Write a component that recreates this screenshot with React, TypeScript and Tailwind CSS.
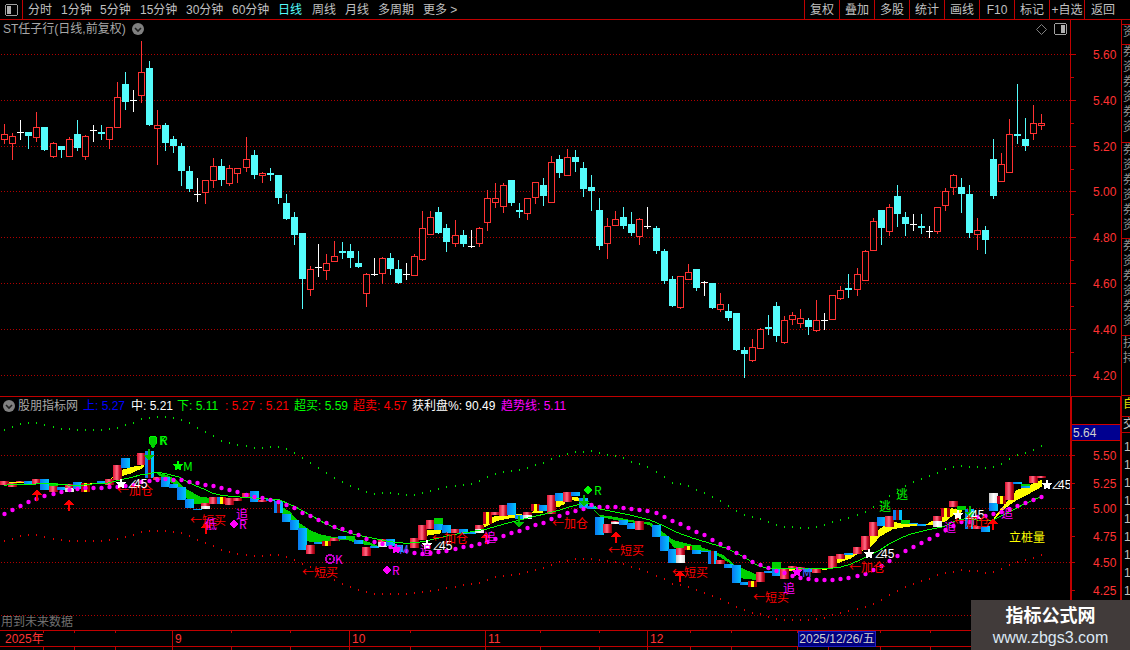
const RED = "#ff3232";
const CY = "#54fcfc";

// candles: type, high, top, bottom, low (page y × 3)
const candles: [string, number, number, number, number][] = [
  ["r",372,403,418,430],["r",400,409,430,476],["w",360,397,397,416],["c",396,396,408,443],["r",336,382,410,423],
  ["c",381,381,450,450],["r",426,430,467,470],["c",438,438,450,471],["r",412,418,467,467],["c",360,402,444,450],
  ["r",405,409,467,476],["w",376,390,390,422],["c",376,396,402,417],["r",382,382,418,444],["r",246,292,382,382],
  ["c",216,252,306,327],["w",270,300,300,333],["r",123,217,286,305],["c",183,204,375,375],["r",330,375,383,492],
  ["c",369,375,429,450],["c",408,417,438,456],["c",429,438,513,555],["c",498,513,567,573],["w",534,582,582,603],
  ["r",541,541,575,609],["r",474,499,541,561],["c",477,498,540,555],["r",495,505,549,555],["r",505,505,520,546],
  ["r",411,478,500,513],["c",450,465,525,534],["r",516,520,526,546],["c",504,519,525,540],["c",525,525,594,609],
  ["c",582,609,657,657],["c",636,651,705,732],["c",699,699,837,924],["r",798,808,867,885],["w",732,802,802,828],
  ["r",762,790,809,837],["r",723,769,782,782],["c",726,753,759,774],["c",732,753,774,801],["c",753,789,801,801],
  ["r",819,822,879,918],["w",774,823,823,825],["r",771,774,819,849],["c",759,774,807,822],["c",780,807,849,849],
  ["w",789,823,823,837],["r",762,768,825,825],["r",633,684,777,780],["r",633,651,702,702],["c",621,636,699,699],
  ["c",672,684,726,753],["r",660,705,729,738],["c",690,705,732,738],["w",690,739,739,741],["r",681,684,729,738],
  ["r",570,594,666,690],["r",549,594,606,621],["r",549,555,618,636],["c",540,540,609,615],["c",610,630,636,651],
  ["r",594,594,639,657],["r",546,547,591,609],["c",534,555,588,615],["r",468,487,605,605],["c",465,477,519,530],
  ["r",447,472,526,526],["c",450,471,486,513],["c",486,504,567,588],["c",525,561,573,630],["c",594,630,738,747],
  ["r",654,678,729,774],["r",633,657,675,675],["c",621,651,678,684],["c",636,672,699,705],["r",654,657,708,732],
  ["w",621,679,679,684],["c",678,684,753,759],["c",747,753,843,849],["c",828,837,918,918],["r",829,829,921,924],
  ["r",792,817,838,838],["c",807,807,864,870],["w",843,847,847,885],["c",849,849,924,924],["r",879,913,926,933],
  ["c",912,933,954,960],["c",939,939,1050,1050],["c",1041,1050,1062,1131],["r",1017,1041,1080,1083],["r",984,987,1044,1044],
  ["c",945,981,986,1002],["c",906,918,1008,1023],["r",948,960,1026,1029],["r",936,946,957,972],["r",927,955,968,981],
  ["c",954,960,981,1002],["r",900,960,990,993],["w",939,960,960,987],["r",885,885,957,957],["r",858,870,894,897],
  ["c",822,864,870,891],["r",804,822,867,885],["r",750,753,840,840],["r",654,664,750,750],["c",630,630,684,732],
  ["r",612,621,693,705],["c",555,588,642,678],["c",637,651,672,705],["w",642,673,673,690],["c",642,678,684,699],
  ["w",678,692,692,711],["r",621,621,693,699],["r",565,574,616,630],["r",522,526,562,582],["c",534,561,582,636],
  ["c",555,582,699,711],["r",654,690,702,747],["c",678,690,720,759],["c",417,477,588,594],["r",459,492,542,542],
  ["r",357,402,515,515],["c",252,402,408,429],["c",354,417,438,450],["r",315,370,398,417],["r",342,370,375,387],
];

const cx = (i: number) => Math.round(4.3 + 8.04 * i);
const yz = (z: number) => Math.round(z / 3);

// indicator bars: index, top, bottom (zoom y), kind
const bars: [number, number, number, string][] = [
  [0,198,211,"r"],[1,205,216,"r"],[2,197,201,"r"],[3,198,207,"b"],[4,192,207,"r"],[5,192,225,"b"],[6,213,232,"r"],[7,215,225,"b"],
  [8,207,219,"r"],[8,219,231,"w"],[9,201,222,"b"],[10,204,231,"y"],[12,198,206,"b"],[13,192,210,"r"],[14,150,195,"r"],
  [15,129,159,"b"],[17,114,150,"r"],[18,108,189,"s"],[19,186,195,"r"],[20,186,216,"b"],[21,207,219,"b"],[22,216,255,"b"],
  [23,252,279,"b"],[24,282,285,"b"],[25,264,273,"r"],[25,273,282,"w"],[26,246,267,"r"],[27,246,267,"s2"],[28,249,270,"r"],
  [29,249,258,"r"],[30,234,249,"r"],[31,228,261,"b"],[32,255,261,"r"],[33,252,258,"b"],[34,258,294,"s"],
  [35,297,321,"b"],[36,315,345,"b"],[37,339,405,"b"],[38,390,417,"r"],[39,381,387,"b"],[40,378,393,"y"],[41,369,378,"r"],
  [42,363,372,"b"],[43,363,372,"g"],[44,375,387,"b"],[45,396,423,"r"],[46,393,399,"b"],[47,372,381,"r"],[47,381,396,"w"],
  [48,372,393,"b"],[49,390,411,"b"],[51,369,399,"r"],[52,330,375,"r"],[53,315,342,"r"],[54,309,327,"g"],[54,327,345,"b"],
  [55,330,354,"b"],[56,342,354,"r"],[57,342,357,"b"],[58,351,358,"b"],[59,330,342,"r"],[59,342,354,"w"],[60,291,327,"y"],
  [61,291,300,"r"],[62,270,303,"r"],[63,264,300,"b"],[64,300,312,"b"],[65,291,300,"r"],[65,300,312,"w"],[66,267,288,"y"],
  [67,270,288,"b"],[68,240,297,"r"],[69,234,258,"b"],
  [70,231,261,"r"],[71,231,243,"b"],[72,249,279,"b"],[73,273,282,"b"],[74,306,360,"b"],[75,327,354,"r"],[76,318,321,"r"],[76,321,327,"w"],
  [77,315,330,"b"],[78,324,342,"b"],[79,318,345,"r"],[81,330,366,"b"],[82,363,408,"b"],[83,402,444,"b"],[84,399,420,"r"],[84,420,444,"w"],
  [85,393,405,"y"],[86,390,405,"g"],[86,405,417,"b"],[87,408,411,"b"],[88,408,447,"s"],[89,435,447,"r"],[90,447,459,"b"],[91,450,504,"b"],
  [92,501,510,"b"],[93,498,516,"y"],[94,471,501,"r"],[95,468,474,"b"],[96,441,462,"g"],[96,462,483,"b"],[97,459,492,"r"],[98,453,459,"r"],
  [99,456,465,"r"],[100,459,471,"b"],[101,459,474,"r"],
  [103,423,459,"r"],[104,417,432,"r"],[105,414,420,"b"],[106,396,417,"r"],[107,363,405,"r"],[108,321,363,"r"],[109,306,333,"b"],
  [110,303,336,"r"],[111,285,315,"s"],[112,315,327,"g"],[113,324,327,"b"],[114,327,333,"b"],[116,303,318,"r"],[116,318,336,"w"],
  [117,279,306,"y"],[118,258,276,"r"],[119,273,285,"g"],[120,282,342,"s"],[121,333,342,"r"],[122,333,351,"b"],[123,234,264,"w"],[123,264,288,"b"],
  [124,243,267,"y"],[125,201,255,"r"],[126,201,207,"b"],[127,207,213,"g"],[127,213,219,"b"],[128,183,204,"r"],[129,183,189,"r"],
];
const fillOf: Record<string, string> = { r: "url(#gr)", b: "url(#gb)", g: "#00d000", w: "url(#gw)", y: "url(#gy)", s: "url(#gs)", s2: "url(#g2)" };

const magenta = [297,285,273,261,252,243,237,231,225,222,219,219,219,216,216,213,210,201,198,195,192,195,195,201,204,210,213,219,225,231,240,246,249,255,261,
  270,279,294,303,315,324,336,342,351,360,372,381,387,396,402,408,414,417,414,411,408,402,396,393,387,381,372,363,354,348,339,330,324,312,303,
  294,288,282,270,276,276,276,279,282,285,288,294,306,318,327,339,351,360,375,387,399,414,426,441,450,459,468,474,483,489,492,495,495,495,492,
  489,483,477,465,453,438,423,408,396,384,372,360,345,333,321,321,306,303,297,291,282,273,264,255,246];
const greenBand = [42,33,24,21,21,27,33,39,39,42,42,42,42,39,36,27,21,9,6,3,3,6,12,21,36,48,60,75,81,87,90,96,96,93,93,
  99,111,126,141,156,171,186,198,210,219,228,234,231,231,234,237,237,231,225,219,213,210,207,204,195,183,174,168,165,162,156,147,141,129,120,
  114,108,108,105,111,117,120,126,138,144,153,168,183,201,204,210,222,231,243,255,270,285,297,303,309,318,327,333,333,336,336,333,327,318,312,
  306,297,288,273,258,240,228,210,198,189,180,171,159,153,150,153,153,156,153,144,129,117,111,102,90];
const redBand = [375,369,360,357,357,363,369,372,375,375,375,375,375,372,369,363,357,348,345,345,345,348,351,360,372,381,390,402,408,414,417,420,420,417,417,
  423,432,444,453,465,477,492,504,513,522,528,534,534,534,534,534,531,528,525,522,516,513,507,504,501,492,483,480,477,474,468,462,456,447,438,
  435,429,429,429,432,435,438,444,453,459,468,480,489,504,507,513,522,531,540,549,561,572,582,590,595,603,609,612,612,612,612,609,606,597,591,
  585,579,572,564,552,537,525,513,504,495,489,477,471,468,462,465,465,471,468,459,447,438,432,426,417];

const pts = (off: number, s: string) =>
  s.split(" ").map((p) => { const [x, y] = p.split(",").map(Number); return `${off + x / 3},${415 + y / 3}`; }).join(" ");

const yellow: [number, string][] = [
  [0,"330,192 365,165 400,155 432,150 430,158 395,175 365,183"],[0,"27,201 72,201 72,205 27,205"],[0,"268,204 312,204 312,208 268,208"],
  [280,"440,345 482,342 482,355 440,362"],[280,"608,325 640,305 680,298 725,298 725,305 690,310 650,318 610,338"],[280,"750,290 790,288 790,293 750,296"],
  [280,"825,260 840,258 840,275 825,275"],[560,"0,258 15,258 15,268 0,272"],[560,"36,245 57,248 57,258 36,256"],[560,"685,462 705,462 705,468 685,468"],
  [560,"785,462 815,456 815,462 785,465"],[560,"830,432 840,432 840,445 830,445"],
  [830,"20,430 45,420 95,405 120,365 145,345 180,320 220,325 290,327 340,300 365,280 395,285 395,292 375,297 345,320 310,330 250,333 190,342 150,365 125,393 110,400 60,432 20,445"],
  [830,"490,310 530,260 560,225 600,210 635,195 636,215 600,235 560,255 525,280 495,312"],
];
const green: [number, string][] = [
  [0,"135,204 175,204 175,213 135,213"],[0,"470,172 500,180 530,195 555,220 600,245 640,250 625,265 585,268 560,250 535,220 505,195 475,180"],
  [280,"5,275 30,290 60,325 90,345 120,358 160,366 200,370 250,376 290,390 290,394 250,388 200,375 160,378 110,384 80,378 50,340 25,310 5,295"],
  [560,"96,280 120,300 160,305 210,315 270,322 300,345 340,375 400,390 450,405 490,420 525,450 570,470 590,480 590,495 545,490 510,445 470,420 440,410 405,405 345,400 325,378 300,362 270,330 240,325 180,318 120,306"],
];
const line: [number, string][] = [
  [0,"12,211 36,208 60,207 84,207 108,207 132,206 156,206 180,208 204,210 228,210 252,210 276,207 300,205 324,204 348,198 372,192 396,187 420,180 444,177 468,171 492,175 516,181 540,187 564,202 588,213 612,222 636,234 660,240 684,243 708,245 732,247 756,249 780,250 804,252 840,254"],
  [280,"0,255 45,275 85,297 135,325 180,345 230,360 280,370 330,380 380,385 430,380 480,368 525,358 575,350 620,342 680,325 740,310 790,298 840,285"],
  [560,"0,285 30,275 70,265 94,265 110,280 150,288 210,300 270,315 305,330 345,350 400,370 460,388 500,400 550,425 590,450 620,460 660,460 735,462 810,459"],
  [830,"0,460 30,457 60,448 90,435 120,420 150,405 180,385 210,370 240,358 270,350 300,343 340,335 375,318 410,310 440,315 490,315 520,300 550,285 580,268 610,255 632,245"],
];

const starPts = (x: number, y: number, r: number) =>
  Array.from({ length: 10 }, (_, k) => {
    const a = -Math.PI / 2 + (k * Math.PI) / 5;
    const q = k % 2 ? r * 0.42 : r;
    return `${x + q * Math.cos(a)},${y + q * Math.sin(a)}`;
  }).join(" ");

const labels: [string, number, number, string][] = [
  ["K",159,440,"#00ff00"],["R",160,440,"#00ff00"],["M",183,466,"#00ff00"],
  ["←加仓",117,490,"#ff0000"],["∠45",128,483,"#ffffff"],["←短买",190,520,"#ff0000"],["低",205,524,"#ff00ff"],
  ["R",239,524,"#ff00ff"],["追",236,514,"#ff00ff"],
  ["K",335,559,"#ff00ff"],["←短买",302,572,"#ff0000"],["R",392,570,"#ff00ff"],["M",399,549,"#5060ff"],
  ["追",420,550,"#ff00ff"],["∠45",433,545,"#ffffff"],["←加仓",432,538,"#ff0000"],["追",484,537,"#ff00ff"],
  ["R",594,490,"#00ff00"],["←加仓",552,523,"#ff0000"],["←短买",608,550,"#ff0000"],["←短买",672,572,"#ff0000"],
  ["←短买",753,597,"#ff0000"],["追",783,588,"#ff00ff"],["M",802,572,"#5060ff"],
  ["逃",896,494,"#00ff00"],["逃",879,506,"#00ff00"],["∠45",875,553,"#ffffff"],["←加仓",849,567,"#ff0000"],
  ["∠45",965,514,"#ffffff"],["←加仓",954,521,"#ff0000"],["追",944,527,"#ff00ff"],["追",1001,513,"#ff00ff"],
  ["∠45",1052,484,"#ffffff"],["立桩量",1009,537,"#ffff00"],
];
const stars: [number, number, string][] = [
  [178,466,"#00ff00"],[121,484,"#ffffff"],[396,549,"#ff00ff"],[427,545,"#ffffff"],[797,572,"#ff00ff"],
  [869,554,"#ffffff"],[958,515,"#ffffff"],[1047,485,"#ffffff"],
];
const diamonds: [number, number, string][] = [[234,524,"#ff00ff"],[387,570,"#ff00ff"],[588,490,"#00ff00"]];
const upArrows: [number, number][] = [[37,489],[69,499],[206,522],[486,532],[616,531],[680,570],[993,518]];
const downArrows: [number, number][] = [[149,449],[519,516],[584,495],[970,506]];

const grid = (ys: number[]) =>
  ys.map((y) => <line key={y} x1="1" x2="1070" y1={y} y2={y} stroke="#b00000" strokeDasharray="1 2" />);

function PriceChart() {
  return (
    <svg className="block w-[1070px] h-[358px]" viewBox="0 38 1070 358" shapeRendering="crispEdges">
      {grid([54.5, 100.5, 146.5, 191.5, 237.5, 283.5, 329.5, 375.5])}
      {candles.map(([t, h, top, bot, l], i) => {
        const x = cx(i);
        const [H, T, B, L] = [yz(h), yz(top), yz(bot), yz(l)];
        if (t === "w")
          return (
            <g key={i} fill="#ffffff">
              <rect x={x} y={H} width="1" height={L - H + 1} />
              <rect x={x - 3} y={T} width="7" height="1" />
            </g>
          );
        if (t === "c")
          return (
            <g key={i} fill={CY}>
              <rect x={x} y={H} width="1" height={L - H + 1} />
              <rect x={x - 3} y={T} width="7" height={Math.max(B - T, 1)} />
            </g>
          );
        return (
          <g key={i}>
            <rect x={x} y={H} width="1" height={T - H} fill={RED} />
            <rect x={x} y={B} width="1" height={L - B + 1} fill={RED} />
            <rect x={x - 2.5} y={T + 0.5} width="6" height={Math.max(B - T, 1)} fill="#000" stroke={RED} />
          </g>
        );
      })}
    </svg>
  );
}

function Label({ t, x, y, c }: { t: string; x: number; y: number; c: string }) {
  const by = y + 4.5;
  if (t.startsWith("∠"))
    return (
      <text y={by} fill={c} shapeRendering="auto">
        <tspan x={x - 1} className="text-[11px]">∠</tspan>
        <tspan x={x + 6}>45</tspan>
      </text>
    );
  return (
    <text x={x} y={by} fill={c} shapeRendering="auto" className="font-['Noto_Sans_CJK_SC','Liberation_Sans',sans-serif]">
      {t}
    </text>
  );
}

function IndicatorChart() {
  return (
    <svg className="block w-[1070px] h-[216px]" viewBox="0 414 1070 216" shapeRendering="crispEdges">
      <defs>
        <linearGradient id="gr"><stop offset="0" stopColor="#e01030" /><stop offset=".45" stopColor="#ff7088" /><stop offset=".7" stopColor="#d01030" /><stop offset="1" stopColor="#800000" /></linearGradient>
        <linearGradient id="gb"><stop offset="0" stopColor="#0a78f0" /><stop offset="1" stopColor="#00c4ff" /></linearGradient>
        <linearGradient id="gw"><stop offset="0" stopColor="#c8c8c8" /><stop offset=".5" stopColor="#ffffff" /><stop offset="1" stopColor="#e0e0e0" /></linearGradient>
        <linearGradient id="gy"><stop offset=".33" stopColor="#c00020" /><stop offset=".33" stopColor="#ffff00" /><stop offset=".66" stopColor="#ffff00" /><stop offset=".66" stopColor="#a00000" /></linearGradient>
        <linearGradient id="gs"><stop offset=".33" stopColor="#0a80f0" /><stop offset=".33" stopColor="#800000" /><stop offset=".66" stopColor="#800000" /><stop offset=".66" stopColor="#00c0ff" /></linearGradient>
        <linearGradient id="g2"><stop offset=".33" stopColor="#0a80f0" /><stop offset=".33" stopColor="#ffff00" /><stop offset=".66" stopColor="#ffff00" /><stop offset=".66" stopColor="#d00000" /></linearGradient>
      </defs>
      {grid([455.5, 508.5, 562.5, 615.5])}
      {greenBand.map((z, i) => <rect key={i} x={cx(i)} y={415 + Math.round(z / 3)} width="1" height="2" fill="#00e000" />)}
      {redBand.map((z, i) => <rect key={i} x={cx(i)} y={415 + Math.round(z / 3)} width="1" height="2" fill="#e00000" />)}
      {yellow.map(([o, s], i) => <polygon key={i} points={pts(o, s)} fill="#ffff00" />)}
      {green.map(([o, s], i) => <polygon key={i} points={pts(o, s)} fill="#00d000" />)}
      {bars.map(([i, t, b, k], n) => (
        <rect key={n} x={cx(i) - 4} y={415 + Math.round(t / 3)} width="9" height={Math.round(b / 3) - Math.round(t / 3)} fill={fillOf[k]} />
      ))}
      {line.map(([o, s], i) => <polyline key={i} points={pts(o, s)} fill="none" stroke="#00ff00" />)}
      {magenta.map((z, i) => <circle key={i} cx={cx(i) + 0.5} cy={415 + z / 3} r="2.2" fill="#ff00ff" shapeRendering="geometricPrecision" />)}
      <circle cx="153" cy="440" r="4" fill="#00d000" stroke="#00ff00" />
      <polygon points="149,443 157,443 153,449" fill="#00d000" />
      <circle cx="330" cy="559" r="4" fill="none" stroke="#c000c0" strokeWidth="2" />
      <circle cx="330" cy="559" r="1.5" fill="#c000c0" />
      {diamonds.map(([x, y, c], i) => <polygon key={i} points={`${x - 4.5},${y} ${x},${y - 4.5} ${x + 4.5},${y} ${x},${y + 4.5}`} fill={c} />)}
      {stars.map(([x, y, c], i) => <polygon key={i} points={starPts(x, y, 6)} fill={c} />)}
      {upArrows.map(([x, y], i) => <polygon key={i} points={`${x},${y} ${x + 5},${y + 6} ${x + 1},${y + 6} ${x + 1},${y + 12} ${x - 1},${y + 12} ${x - 1},${y + 6} ${x - 5},${y + 6}`} fill="#ff0000" />)}
      {downArrows.map(([x, y], i) => <polygon key={i} points={`${x - 1},${y} ${x + 1},${y} ${x + 1},${y + 6} ${x + 5},${y + 6} ${x},${y + 12} ${x - 5},${y + 6} ${x - 1},${y + 6}`} fill="#00c000" />)}
      {labels.map(([t, x, y, c], i) => <Label key={i} t={t} x={x} y={y} c={c} />)}
    </svg>
  );
}

function PriceAxis() {
  const majors: [number, string][] = [[54.5,"5.60"],[100.5,"5.40"],[146.5,"5.20"],[191.5,"5.00"],[237.5,"4.80"],[283.5,"4.60"],[329.5,"4.40"],[375.5,"4.20"]];
  const minors = [77.5, 123.5, 169.5, 214.5, 260.5, 306.5, 352.5];
  return (
    <svg className="block w-[50px] h-[376px]" viewBox="1071 20 50 376" shapeRendering="crispEdges">
      {majors.map(([y, t]) => (
        <g key={t}>
          <line x1="1071" x2="1076" y1={y} y2={y} stroke="#c00000" />
          <text x="1093" y={y + 4.5} fill={RED}>{t}</text>
        </g>
      ))}
      {minors.map((y) => <line key={y} x1="1071" x2="1074" y1={y} y2={y} stroke="#c00000" />)}
    </svg>
  );
}

function IndicatorAxis() {
  const majors: [number, string][] = [[455.5,"5.50"],[483.5,"5.25"],[508.5,"5.00"],[536.5,"4.75"],[562.5,"4.50"],[590.5,"4.25"]];
  return (
    <svg className="block w-[48px] h-[233px]" viewBox="1072 397 48 233" shapeRendering="crispEdges">
      {majors.map(([y, t]) => (
        <g key={t}>
          <line x1="1072" x2="1075" y1={y} y2={y} stroke="#c00000" />
          <text x="1093" y={y + 4.5} fill={RED}>{t}</text>
        </g>
      ))}
    </svg>
  );
}

const tabs = [
  ["分时", "w-[33px]"], ["1分钟", "w-[39px]"], ["5分钟", "w-[40px]"], ["15分钟", "w-[46px]"], ["30分钟", "w-[46px]"], ["60分钟", "w-[46px]"],
  ["日线", "w-[34px] text-[#54fcfc]"], ["周线", "w-[33px]"], ["月线", "w-[33px]"], ["多周期", "w-[45px]"], ["更多 >", "w-[40px]"],
];
const buttons = ["复权", "叠加", "多股", "统计", "画线", "F10", "标记", "+自选"];
const legend: [string, string, string][] = [
  ["上: 5.27", "w-[48px]", "text-[#0000ff]"], ["中: 5.21", "w-[46px]", "text-white"], ["下: 5.11", "w-[48px]", "text-[#00ff00]"],
  [": 5.27", "w-[34px]", "text-[#ff0000]"], [": 5.21", "w-[35px]", "text-[#ff0000]"], ["超买: 5.59", "w-[59px]", "text-[#00ff00]"],
  ["超卖: 4.57", "w-[59px]", "text-[#ff0000]"], ["获利盘%: 90.49", "w-[89px]", "text-white"], ["趋势线: 5.11", "w-[80px]", "text-[#ff00ff]"],
];
const sideTop: [string, string][] = [["", "h-[5px]"], ["资", "h-[20px]"], ["券资券资券资", "h-[98px]"], ["券资券资券资", "h-[96px]"], ["券资券资券资", "h-[97px]"], ["扶持", "h-[60px]"]];

const topTicks = [43, 74, 115, 172, 231, 290, 349, 410, 485, 540, 599, 647, 690, 731, 797, 828, 880, 930];

function Dock({ right }: { right?: boolean }) {
  return (
    <svg width="13" height="12" viewBox="0 0 13 12" shapeRendering="crispEdges">
      <rect x="0.5" y="0.5" width="12" height="11" rx="2" fill="#000" stroke="#a0a0a0" />
      <rect x={right ? 7 : 2} y="2" width="4" height="8" fill="#b0b0b0" />
    </svg>
  );
}

function Chevron() {
  return (
    <svg width="12" height="12" viewBox="0 0 12 12">
      <circle cx="6" cy="6" r="6" fill="#808080" />
      <path d="M3 5 L6 8 L9 5" fill="none" stroke="#202020" strokeWidth="1.6" />
    </svg>
  );
}

export default function App() {
  return (
    <div className="relative flex flex-col w-[1130px] h-[650px] overflow-hidden bg-black text-[12px] leading-none text-[#c0c0c0] font-['Liberation_Sans','Noto_Sans_CJK_SC',sans-serif]">
      <header className="flex items-center h-[20px] shrink-0 border-b border-[#c00000]">
        <div className="flex items-center justify-center w-[23px] h-full border-r border-[#c00000]"><Dock /></div>
        <nav className="flex ml-[5px]">
          {tabs.map(([t, c]) => <span key={t} className={c}>{t}</span>)}
        </nav>
        <div className="flex ml-auto h-full">
          {buttons.map((b) => (
            <span key={b} className="flex items-center justify-center w-[35px] h-full border-l border-[#c00000]">{b}</span>
          ))}
          <span className="flex items-center w-[46px] h-full pl-[6px] border-l border-[#c00000]">返回</span>
        </div>
      </header>

      <main className="flex flex-1 min-h-0">
        <div className="flex flex-col w-[1070px] shrink-0">
          <section className="h-[377px] border-b border-[#c00000]">
            <div className="flex items-center h-[18px] pl-[3px] text-[#a8a8a8]">
              <span>ST任子行(日线,前复权)</span>
              <span className="ml-[6px] flex"><Chevron /></span>
              <svg className="ml-auto" width="11" height="11" viewBox="0 0 11 11"><path d="M5.5 .5 L10.5 5.5 L5.5 10.5 L.5 5.5 Z" fill="none" stroke="#808080" /></svg>
              <span className="flex ml-[7px] mr-[3px]"><Dock right /></span>
            </div>
            <PriceChart />
          </section>
          <section className="relative h-[233px]">
            <div className="flex items-center h-[17px] pl-[3px]">
              <Chevron />
              <span className="w-[68px] pl-[3px] text-[#a8a8a8]">股朋指标网</span>
              {legend.map(([t, w, c]) => <span key={t} className={`${w} ${c} whitespace-nowrap`}>{t}</span>)}
            </div>
            <IndicatorChart />
            <span className="absolute left-[1px] bottom-[2px] text-[#707070]">用到未来数据</span>
          </section>
        </div>

        <div className="relative flex flex-col w-[52px] shrink-0">
          <div className="h-[377px] border-b border-x border-[#c00000]"><PriceAxis /></div>
          <div className="border-x-2 border-[#c00000]"><IndicatorAxis /></div>
          <div className="absolute top-[404px] left-[2px] right-[2px] flex items-center h-[17px] pl-[1px] bg-[#000090] border-y border-[#d00000] text-[#d0d0d0]">5.64</div>
        </div>

        <aside className="flex flex-col flex-1 min-w-0 overflow-hidden">
          {sideTop.map(([t, h], i) => (
            <div key={i} className={`${h} overflow-hidden border-b border-[#c00000] pl-[1px] leading-[15px] text-[#909090]`}>
              {t.split("").map((c, k) => <div key={k}>{c}</div>)}
            </div>
          ))}
          <div className="h-[21px] pl-[1px] pt-[2px] border-b border-[#c00000] text-[#e0e000]">自</div>
          <div className="h-[16px] pl-[1px] pt-[1px] border-b border-[#c00000] text-[#c0c0c0]">交</div>
          <div className="pl-[2px] pt-[5px] text-[#c0c0c0] leading-[18px]">
            {Array.from({ length: 10 }, (_, i) => <div key={i}>1</div>)}
          </div>
        </aside>
      </main>

      <footer className="relative h-[20px] shrink-0 border-t border-[#c00000]">
        <div className="flex h-[16px] border-b border-[#c00000] text-[#ff3232]">
          <span className="w-[172px] pl-[5px] pt-[2px]">2025年</span>
          <span className="w-[177px] pl-[2px] pt-[2px] border-l border-[#c00000]">9</span>
          <span className="w-[136px] pl-[2px] pt-[2px] border-l border-[#c00000]">10</span>
          <span className="w-[162px] pl-[2px] pt-[2px] border-l border-[#c00000]">11</span>
          <span className="w-[150px] pl-[2px] pt-[2px] border-l border-[#c00000]">12</span>
        </div>
        <svg className="absolute top-0 left-0" width="971" height="19" viewBox="0 0 971 19" shapeRendering="crispEdges">
          {topTicks.map((x) => (
            <g key={x} fill="#c00000">
              <rect x={x} y="0" width="1" height="2" />
              <rect x={x} y="15" width="1" height="4" />
            </g>
          ))}
        </svg>
        <div className="absolute top-0 left-[798px] flex items-center justify-center w-[78px] h-[16px] bg-[#000080] border border-[#2020c0] text-[#d0d0d0]">2025/12/26/五</div>
      </footer>

      <div className="absolute right-0 bottom-0 flex flex-col items-center w-[159px] h-[50px] pt-[6px] bg-[#413b3a]">
        <span className="text-[18px] leading-[20px] font-bold text-white">指标公式网</span>
        <span className="mt-[3px] text-[16px] leading-[18px] text-[#dce8f4]">www.zbgs3.com</span>
      </div>
    </div>
  );
}
